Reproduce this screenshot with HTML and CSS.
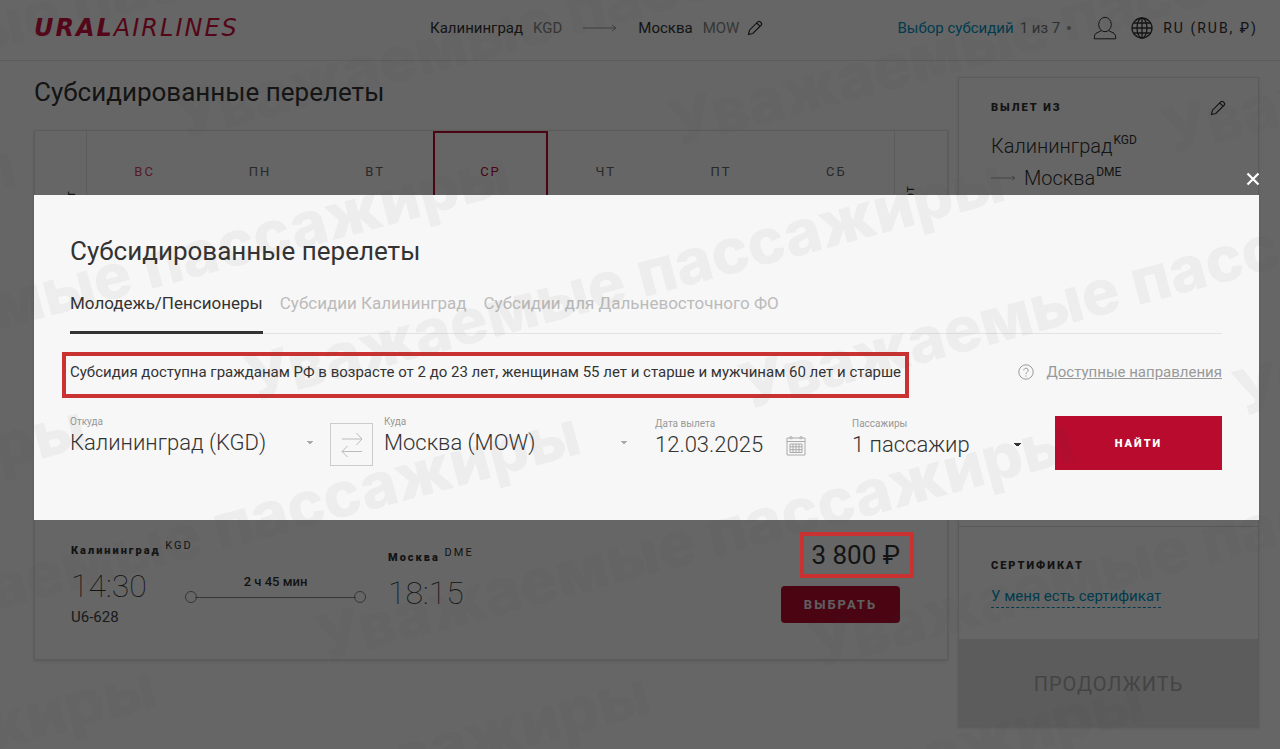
FILE: index.html
```html
<!DOCTYPE html>
<html lang="ru">
<head>
<meta charset="utf-8">
<meta name="viewport" content="width=device-width, initial-scale=1">
<title>Субсидированные перелеты</title>
<link rel="stylesheet" href="styles.css">
</head>
<body>
<svg class="defs" aria-hidden="true">
  <symbol id="pencil" viewBox="0 0 16 16"><path d="M1.5 14.5l1-4.3L11 1.700a1.400 1.400 0 0 1 2 0l1.300 1.300a1.400 1.400 0 0 1 0 2L5.800 13.500zM9.800 3l3.300 3.300"/></symbol>
</svg>

<header class="header">
  <a class="logo" href="#" aria-label="Ural Airlines"><b>URAL</b><span>AIRLINES</span></a>
  <div class="route">
    <span>Калининград</span><span class="code">KGD</span>
    <svg class="route-arrow" viewBox="0 0 34 10"><path d="M0 5h33M29 2l4 3-4 3"/></svg>
    <span>Москва</span><span class="code">MOW</span>
    <button class="icon-btn" aria-label="Изменить маршрут"><svg class="pencil"><use href="#pencil"/></svg></button>
  </div>
  <div class="tools">
    <a class="step" href="#">Выбор субсидий</a><span class="step-count">1 из 7</span><i class="dot"></i>
    <button class="icon-btn user" aria-label="Личный кабинет"><svg viewBox="0 0 24 24"><ellipse cx="12" cy="8.5" rx="6.3" ry="7.2"/><path d="M8.5 14.6L3 17.3Q1.2 18.3 1.2 22.8h21.6q0-4.5-1.8-5.5l-5.500-2.700"/></svg></button>
    <button class="lang"><svg viewBox="0 0 22 22"><circle cx="11" cy="11" r="10"/><ellipse cx="11" cy="11" rx="5" ry="10"/><path d="M11 1v20M1 11h20M2.600 6h16.800M2.600 16h16.800"/></svg>RU (RUB, ₽)</button>
  </div>
</header>

<main class="page">
  <section class="results">
    <h1 class="title">Субсидированные перелеты</h1>
    <div class="card">
      <div class="calendar">
        <div class="month"><span>март</span></div>
        <div class="day sunday">ВС</div>
        <div class="day">ПН</div>
        <div class="day">ВТ</div>
        <div class="day selected">СР</div>
        <div class="day">ЧТ</div>
        <div class="day">ПТ</div>
        <div class="day">СБ</div>
        <div class="month next"><span>март</span></div>
      </div>
      <div class="flight">
        <div class="point">
          <div class="city">Калининград <sup>KGD</sup></div>
          <time class="time">14:30</time>
          <div class="number">U6-628</div>
        </div>
        <div class="duration">
          <span>2 ч 45 мин</span>
          <div class="track"></div>
        </div>
        <div class="point arrival">
          <div class="city">Москва <sup>DME</sup></div>
          <time class="time">18:15</time>
        </div>
        <div class="offer">
          <div class="price">3 800 ₽</div>
          <button class="choose">ВЫБРАТЬ</button>
        </div>
      </div>
    </div>
  </section>

  <aside class="summary">
    <section class="trip">
      <div class="trip-head"><h2 class="caption">ВЫЛЕТ ИЗ</h2><button class="icon-btn" aria-label="Изменить вылет"><svg class="pencil"><use href="#pencil"/></svg></button></div>
      <div class="trip-city">Калининград<sup>KGD</sup></div>
      <div class="trip-city"><svg viewBox="0 0 25 10"><path d="M0 5h24M21 3l3 2-3 2"/></svg>Москва<sup>DME</sup></div>
    </section>
    <section class="certificate">
      <h2 class="caption">СЕРТИФИКАТ</h2>
      <a href="#">У меня есть сертификат</a>
    </section>
    <button class="continue">ПРОДОЛЖИТЬ</button>
  </aside>
</main>

<div class="overlay">
  <div class="modal" role="dialog" aria-labelledby="modal-title">
    <button class="close" aria-label="Закрыть"><svg viewBox="0 0 14 14"><path d="M1.500 1.500l11 11M12.500 1.500l-11 11"/></svg></button>
    <h2 class="modal-title" id="modal-title">Субсидированные перелеты</h2>
    <nav class="tabs">
      <a class="tab active" href="#">Молодежь/Пенсионеры</a>
      <a class="tab" href="#">Субсидии Калининград</a>
      <a class="tab" href="#">Субсидии для Дальневосточного ФО</a>
    </nav>
    <div class="info">
      <p class="note">Субсидия доступна гражданам РФ в возрасте от 2 до 23 лет, женщинам 55 лет и старше и мужчинам 60 лет и старше</p>
      <div class="help">
        <svg viewBox="0 0 16 16"><circle cx="8" cy="8" r="7.200"/><path d="M5.800 6.400a2.200 2.200 0 1 1 3.400 1.800q-1.200.7-1.200 1.900M8 11.400v1.300"/></svg>
        <a href="#">Доступные направления</a>
      </div>
    </div>
    <form class="search">
      <div class="field from"><label for="from">Откуда</label><select id="from"><option>Калининград (KGD)</option></select></div>
      <button class="swap" type="button" aria-label="Поменять местами"><svg viewBox="0 0 22 26"><path d="M1 7h20M15.500 1l5.500 6-5.500 6M21 19.500H1M6.500 14l-5.500 5.500L6.500 25"/></svg></button>
      <div class="field to"><label for="to">Куда</label><select id="to"><option>Москва (MOW)</option></select></div>
      <div class="field date"><label for="date">Дата вылета</label>
        <div class="date-row"><input id="date" type="text" value="12.03.2025"><svg viewBox="0 0 20 21"><path d="M1 3h18v17H1zM1 6.500h18M5 1.500a1.200 1.200 0 1 0 .1 0M15 1.500a1.200 1.200 0 1 0 .1 0M4 9h12v8.500H4zM4 11.800h12M4 14.700h12M7 9v8.500M10 9v8.500M13 9v8.500"/></svg></div></div>
      <div class="field passengers"><label for="pax">Пассажиры</label><select id="pax"><option>1 пассажир</option></select></div>
      <button class="submit" type="submit">НАЙТИ</button>
    </form>
  </div>
</div>

<svg class="watermark" aria-hidden="true">
  <defs><text id="mark" transform="rotate(-15)">Уважаемые пассажиры</text></defs>
  <use href="#mark" x="112" y="-120"/><use href="#mark" x="606" y="-113"/>
  <use href="#mark" x="-312" y="132"/><use href="#mark" x="182" y="140"/><use href="#mark" x="676" y="147"/><use href="#mark" x="1170" y="155"/>
  <use href="#mark" x="-735" y="387"/><use href="#mark" x="-241" y="394"/><use href="#mark" x="253" y="402"/><use href="#mark" x="747" y="410"/><use href="#mark" x="1241" y="417"/>
  <use href="#mark" x="-665" y="648"/><use href="#mark" x="-171" y="655"/><use href="#mark" x="323" y="662"/><use href="#mark" x="817" y="669"/>
  <use href="#mark" x="-595" y="908"/><use href="#mark" x="-101" y="915"/><use href="#mark" x="393" y="922"/>
</svg>
</body>
</html>
```
FILE: styles.css
```css
* { box-sizing: border-box; }
body { margin: 0; min-height: 100vh; background: #fff; color: #333; font-family: Roboto, "Noto Sans", sans-serif; font-size: 15px; overflow: hidden; }
button, input, select { font: inherit; color: inherit; margin: 0; padding: 0; border: 0; background: none; }
h1, h2, p { margin: 0; font-weight: 400; }
a { color: inherit; text-decoration: none; }
svg { fill: none; stroke: currentColor; display: block; }
.defs { position: absolute; width: 0; height: 0; }

.header { display: grid; grid-template-columns: 396px auto 1fr; align-items: center; height: 61px; padding: 0 22px 4px 34px; border-bottom: 1px solid #e6e6e6; }
.logo { color: #d3103f; font-family: "DejaVu Sans", sans-serif; font-size: 24px; font-style: italic; letter-spacing: 2px; line-height: 24px; }
.logo span { font-weight: 200; }
.route { display: flex; align-items: center; gap: 10px; }
.code { color: #888; }
.route-arrow { width: 34px; height: 10px; margin: 0 11px; color: #999; }
.icon-btn { display: block; }
.pencil { width: 16px; height: 16px; stroke-width: 1.2; }
.route .icon-btn { margin-left: -2px; }
.tools { display: flex; align-items: center; justify-content: flex-end; white-space: nowrap; }
.step { color: #0093c4; }
.step-count { margin-left: 6px; color: #777; }
.dot { width: 4px; height: 4px; margin: 0 22px 0 7px; border-radius: 2px; background: #999; }
.user svg { width: 24px; height: 24px; }
.lang { display: flex; align-items: center; gap: 10px; margin-left: 14px; font-size: 14px; letter-spacing: 2px; }
.lang svg { width: 22px; height: 22px; stroke-width: 1.3; }

.page { display: grid; grid-template-columns: 1fr 301px; gap: 10px; padding: 0 21px 20px 34px; align-items: start; }
.title { padding: 14px 0 21px; font-size: 26px; line-height: 34px; }
.card { border: 1px solid #e3e3e3; box-shadow: 0 1px 3px rgba(0, 0, 0, .15); }
.calendar { display: grid; grid-template-columns: 52px repeat(7, 1fr) 53px; height: 380px; }
.month { padding-top: 59px; border-right: 1px solid #e3e3e3; display: flex; justify-content: center; padding-left: 20px; font-size: 13px; letter-spacing: 1px; }
.month.next { padding-top: 54px; padding-left: 0; padding-right: 22px; border-right: 0; border-left: 1px solid #e3e3e3; }
.month span { writing-mode: vertical-rl; transform: rotate(180deg); height: 40px; text-align: right; }
.day { padding-top: 32px; text-align: center; font-size: 13px; line-height: 18px; letter-spacing: 2px; color: #666; }
.sunday { color: #d3455f; }
.selected { color: #b80b2e; border: 2px solid #b80b2e; padding-top: 30px; }
.flight { display: flex; align-items: flex-start; height: 148px; padding: 21px 47px 0 36px; }
.point { width: 114px; }
.city { font-size: 11px; font-weight: 900; letter-spacing: 2px; line-height: 22px; white-space: nowrap; padding-top: 8px; }
.city sup { font-weight: 400; font-size: 11px; line-height: 0; vertical-align: 5px; letter-spacing: 2px; }
.time { display: block; padding-top: 2px; font-size: 32px; font-weight: 100; line-height: 44px; }
.number { font-size: 15px; line-height: 18px; color: #444; }
.duration { width: 181px; padding-top: 42px; text-align: center; font-size: 13px; font-weight: 500; line-height: 16px; }
.track { display: flex; align-items: center; justify-content: space-between; margin-top: 1px; color: #888; background: linear-gradient(#888, #888) center / calc(100% - 20px) 1px no-repeat; }
.track::before, .track::after { content: ""; width: 10px; height: 10px; border: 1px solid; border-radius: 50%; }
.arrival { margin-left: 22px; padding-top: 7px; }
.offer { flex: 1; display: flex; flex-direction: column; align-items: flex-end; }
.price { position: relative; font-size: 26px; line-height: 46px; }
.price::after { content: ""; position: absolute; z-index: 20; inset: 0 -14px 0 -11px; border: 4px solid #c93231; }
.choose { margin-top: 8px; width: 119px; height: 37px; border-radius: 4px; background: #b80b2e; color: #eee; font-size: 13px; font-weight: 700; letter-spacing: 2px; }

.summary { margin-top: 16px; border: 1px solid #e3e3e3; box-shadow: 0 1px 3px rgba(0, 0, 0, .12); }
.caption { font-size: 11px; font-weight: 900; letter-spacing: 2px; line-height: 16px; }
.trip { height: 449px; padding: 22px 32px 0; border-bottom: 1px solid #dcdcdc; }
.trip-head { display: flex; justify-content: space-between; padding-bottom: 14px; }
.trip-city { font-size: 20px; font-weight: 300; line-height: 32px; display: flex; align-items: center; }
.trip-city sup { font-size: 12px; font-weight: 400; line-height: 12px; align-self: flex-start; padding: 4px 0 0 1px; }
.trip-city svg { width: 25px; height: 10px; margin-right: 8px; color: #aaa; }
.certificate { padding: 31px 32px 31px; }
.certificate a { display: inline-block; margin-top: 12px; color: #0093c4; line-height: 21px; border-bottom: 1px dashed; }
.continue { display: block; width: 100%; height: 87px; padding-top: 2px; background: #e6e6e6; color: #aaa; font-size: 20px; letter-spacing: 1px; }

.overlay { position: fixed; inset: 0; z-index: 10; padding: 195px 21px 0 34px; background: rgba(0, 0, 0, .6); }
.modal { position: relative; padding: 37px 37px 50px 36px; background: #f7f7f7; }
.close { position: absolute; right: -1px; top: -23px; color: #fff; }
.close svg { width: 14px; height: 14px; stroke-width: 2.2; }
.modal-title { font-size: 26px; line-height: 38px; }
.tabs { display: flex; gap: 17px; margin-top: 18px; border-bottom: 1px solid #e3e3e3; font-size: 17px; line-height: 30px; color: #bbb; }
.tab { padding-bottom: 16px; margin-bottom: -1px; }
.tab.active { color: #333; border-bottom: 3px solid #333; padding-bottom: 13px; }
.info { display: flex; align-items: center; justify-content: space-between; margin-top: 18px; }
.note { margin-left: -8px; padding: 5px 4px 11px; line-height: 22px; border: 4px solid #c93231; }
.help { display: flex; align-items: center; gap: 13px; color: #999; margin-bottom: 6px; }
.help svg { width: 16px; height: 16px; }
.help a { text-decoration: underline; }
.search { display: flex; margin-top: 18px; align-items: flex-start; }
.field { display: flex; flex-direction: column; color: #333; }
.field label { font-size: 10px; line-height: 12px; color: #999; }
.field select, .field input { font-size: 22px; font-weight: 300; line-height: 30px; height: 30px; outline: 0; }
.field select { appearance: none; background: linear-gradient(to top right, transparent 50%, #aaa 50%) right 6px center / 4px 4px no-repeat, linear-gradient(to top left, transparent 50%, #aaa 50%) right 2px center / 4px 4px no-repeat; }
.field.passengers select { background: linear-gradient(to top right, transparent 50%, #333 50%) right 4px center / 4px 4px no-repeat, linear-gradient(to top left, transparent 50%, #333 50%) right 0 center / 4px 4px no-repeat; }
.from { width: 246px; }
.swap { width: 43px; height: 43px; margin: 7px 11px 0 14px; border: 1px solid #ccc; display: grid; place-items: center; color: #bbb; }
.swap svg { width: 22px; height: 26px; }
.to { width: 246px; }
.date { width: 151px; margin: 2px 46px 0 25px; }
.date-row { display: flex; justify-content: space-between; align-items: center; }
.date-row input { width: 120px; }
.date-row svg { width: 20px; height: 21px; color: #aaa; }
.passengers { width: 170px; margin-top: 2px; }
.submit { margin-left: auto; width: 167px; height: 54px; background: #b80b2e; color: #fff; font-size: 11px; font-weight: 900; letter-spacing: 2px; }

.watermark { position: fixed; inset: 0; z-index: 30; width: 100%; height: 100%; pointer-events: none; fill: #484848; stroke: none; opacity: .055; font: 800 63px Inter, sans-serif; }
```
